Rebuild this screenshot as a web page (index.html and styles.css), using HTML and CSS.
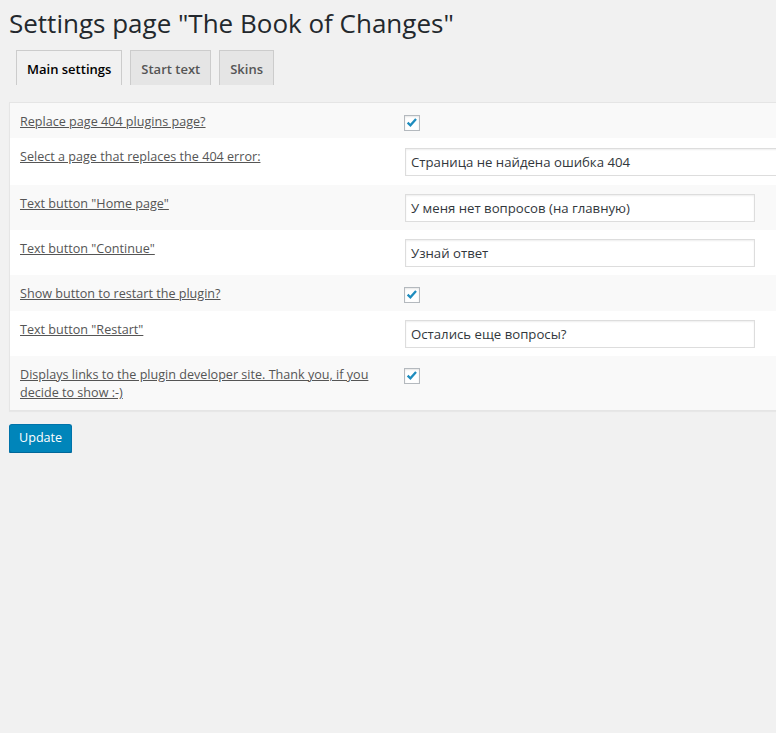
FILE: index.html
```html
<!DOCTYPE html>
<html>
<head>
<meta charset="utf-8">
<link rel="stylesheet" href="styles.css">
</head>
<body>
<div class="wrap">
  <h1 class="title">Settings page "The Book of Changes"</h1>
  <nav class="tabs">
    <span class="tab active">Main settings</span>
    <span class="tab">Start text</span>
    <span class="tab">Skins</span>
  </nav>
  <div class="panel">
    <div class="row alt">
      <div class="label"><span class="lnk">Replace page 404 plugins page?</span></div>
      <div class="field"><span class="check"><svg viewBox="0 0 16 16" width="14" height="14"><path d="M3 7.6 L6.2 10.6 L12.6 3.4" fill="none" stroke="#1e8cbe" stroke-width="2.6"/></svg></span></div>
    </div>
    <div class="row sel-row">
      <div class="label"><span class="lnk">Select a page that replaces the 404 error:</span></div>
      <div class="field"><div class="input wide">Страница не найдена ошибка 404</div></div>
    </div>
    <div class="row alt">
      <div class="label"><span class="lnk">Text button "Home page"</span></div>
      <div class="field"><div class="input">У меня нет вопросов (на главную)</div></div>
    </div>
    <div class="row">
      <div class="label"><span class="lnk">Text button "Continue"</span></div>
      <div class="field"><div class="input">Узнай ответ</div></div>
    </div>
    <div class="row alt">
      <div class="label"><span class="lnk">Show button to restart the plugin?</span></div>
      <div class="field"><span class="check"><svg viewBox="0 0 16 16" width="14" height="14"><path d="M3 7.6 L6.2 10.6 L12.6 3.4" fill="none" stroke="#1e8cbe" stroke-width="2.6"/></svg></span></div>
    </div>
    <div class="row">
      <div class="label"><span class="lnk">Text button "Restart"</span></div>
      <div class="field"><div class="input">Остались еще вопросы?</div></div>
    </div>
    <div class="row alt last">
      <div class="label"><span class="lnk">Displays links to the plugin developer site. Thank you, if you decide to show :-)</span></div>
      <div class="field"><span class="check"><svg viewBox="0 0 16 16" width="14" height="14"><path d="M3 7.6 L6.2 10.6 L12.6 3.4" fill="none" stroke="#1e8cbe" stroke-width="2.6"/></svg></span></div>
    </div>
  </div>
  <button class="btn">Update</button>
</div>
</body>
</html>
```
FILE: styles.css
```css
html, body {
  margin: 0;
  padding: 0;
  overflow: hidden;
  background: #f1f1f1;
  font-family: "Open Sans", "Noto Sans", sans-serif;
  color: #444;
}
.wrap {
  padding: 0 0 0 9px;
  width: 800px;
}
.title {
  margin: 0;
  padding: 7px 0 0;
  height: 33px;
  font-size: 26px;
  font-weight: 400;
  line-height: 32px;
  color: #23282d;
}
.tabs {
  display: flex;
  gap: 8px;
  padding: 10px 0 0 7px;
  height: 35px;
}
.tab {
  display: block;
  box-sizing: border-box;
  height: 35px;
  padding: 6px 10px 0;
  border: 1px solid #ccc;
  border-bottom: none;
  background: #e5e5e5;
  color: #555;
  font-size: 13px;
  font-weight: 600;
  line-height: 24px;
}
.tab.active {
  background: #f1f1f1;
  color: #000;
}
.panel {
  margin-top: 17px;
  background: #fff;
  border: 1px solid #e5e5e5;
  box-shadow: 0 1px 1px rgba(0,0,0,.04);
}
.row {
  display: grid;
  grid-template-columns: 385px 1fr;
  height: 45px;
  box-sizing: border-box;
}
.row.alt { background: #f9f9f9; }
.row.alt:first-child { height: 35px; }
.row.alt:nth-child(5) { height: 36px; }
.row.sel-row { height: 47px; }
.row.last { height: 54px; }
.label {
  padding: 10px 10px 0;
  font-size: 12.6px;
  line-height: 18px;
}
.lnk {
  text-decoration: underline;
  color: #555;
}
.field {
  padding: 9px 10px 0;
}
.sel-row .field { padding-top: 10px; }
.check {
  display: flex;
  align-items: center;
  justify-content: center;
  box-sizing: border-box;
  width: 16px;
  height: 16px;
  margin: 3px 0 0 -1px;
  border: 1px solid #b4b9be;
  background: #fff;
  box-shadow: inset 0 1px 2px rgba(0,0,0,.1);
}
.input {
  box-sizing: border-box;
  width: 350px;
  height: 28px;
  padding: 0 5px;
  border: 1px solid #ddd;
  background: #fff;
  box-shadow: inset 0 1px 2px rgba(0,0,0,.07);
  font-size: 13.2px;
  line-height: 26px;
  color: #32373c;
}
.input.wide { width: 420px; }
.btn {
  display: block;
  margin-top: 13px;
  height: 29px;
  padding: 0 9px 1px;
  border: 1px solid #0073aa;
  border-bottom-color: #006799;
  border-radius: 3px;
  background: #0085ba;
  box-shadow: 0 1px 0 #006799;
  color: #fff;
  font-family: "Open Sans", "Noto Sans", sans-serif;
  font-size: 12.6px;
  line-height: 26px;
}
```
